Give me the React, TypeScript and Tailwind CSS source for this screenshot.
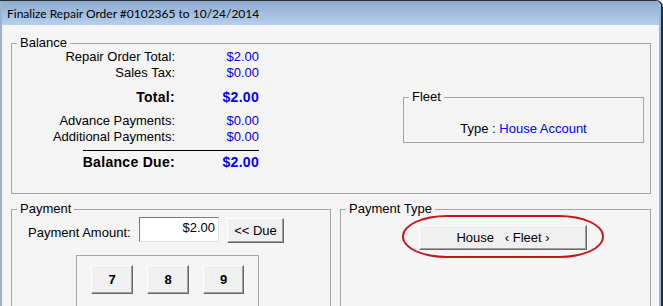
import React from 'react';

const sans = "font-['Liberation_Sans',Arial,sans-serif]";

function RaisedButton({ className = '', children }: { className?: string; children: React.ReactNode }) {
    return (
        <div
            className={`flex items-center justify-center border border-t-white border-l-white border-r-[#696969] border-b-[#696969] bg-[#f0f0f0] shadow-[inset_-1px_-1px_0_#a0a0a0] ${className}`}
        >
            {children}
        </div>
    );
}

function Group({ label, className = '', children }: { label: string; className?: string; children?: React.ReactNode }) {
    return (
        <fieldset className={`border border-[#a5a5a5] ${className}`}>
            <legend className="ml-[5px] px-[3px] text-[13px] leading-[14px] text-black">{label}</legend>
            {children}
        </fieldset>
    );
}

export default function App() {
    return (
        <div className={`h-[306px] w-[663px] overflow-hidden rounded-tr-[7px] border-t border-r-2 border-[#2b2b2b] ${sans}`}>
            <div className="flex h-full flex-col border-r-2 border-l-2 border-r-[#86bde9] border-l-[#9ab3d3]">
                <div className="flex h-[24px] shrink-0 items-center bg-gradient-to-b from-[#8dabd1] to-[#b7cfeb] pl-[5px] pt-[2px] font-['Lato','Noto_Sans',sans-serif] text-[12px] text-black">
                    Finalize Repair Order #0102365 to 10/24/2014
                </div>
                <div className="min-h-0 flex-1 bg-[#f5f5f5] pl-[9px] pt-[11px] text-[13px]">
                    <Group label="Balance" className="h-[158px] w-[640px]">
                        <div className="flex">
                            <div className="w-[247px] leading-[14px]">
                                <div className="flex h-[14px]">
                                    <span className="w-[163px] text-right">Repair Order Total:</span>
                                    <span className="w-[84px] text-right text-[#0000ff]">$2.00</span>
                                </div>
                                <div className="mt-[2px] flex h-[14px]">
                                    <span className="w-[163px] text-right">Sales Tax:</span>
                                    <span className="w-[84px] text-right text-[#0000ff]">$0.00</span>
                                </div>
                                <div className="mt-[10px] flex h-[14px] text-[14px] font-bold tracking-[0.3px]">
                                    <span className="w-[163px] text-right">Total:</span>
                                    <span className="w-[84px] text-right text-[#0000ff]">$2.00</span>
                                </div>
                                <div className="mt-[10px] flex h-[14px]">
                                    <span className="w-[163px] text-right">Advance Payments:</span>
                                    <span className="w-[84px] text-right text-[#0000ff]">$0.00</span>
                                </div>
                                <div className="mt-[2px] flex h-[14px]">
                                    <span className="w-[163px] text-right">Additional Payments:</span>
                                    <span className="w-[84px] text-right text-[#0000ff]">$0.00</span>
                                </div>
                                <div className="ml-[71px] mt-[6px] h-[1px] w-[176px] bg-black" />
                                <div className="mt-[4px] flex h-[14px] text-[14px] font-bold tracking-[0.3px]">
                                    <span className="w-[163px] text-right">Balance Due:</span>
                                    <span className="w-[84px] text-right text-[#0000ff]">$2.00</span>
                                </div>
                            </div>
                            <Group label="Fleet" className="ml-[144px] mt-[40px] h-[53px] w-[241px]">
                                <div className="mt-[18px] text-center leading-[14px]">
                                    Type : <span className="text-[#0000ff]">House Account</span>
                                </div>
                            </Group>
                        </div>
                    </Group>

                    <div className="mt-[8px] flex gap-[9px]">
                        <Group label="Payment" className="h-[120px] w-[320px]">
                            <div className="mt-[1px] flex items-start">
                                <span className="mt-[9px] w-[127px] pl-[16px] leading-[14px]">Payment Amount:</span>
                                <div className="h-[25px] w-[80px] border border-t-[#7a7a7a] border-l-[#7a7a7a] border-r-[#e3e3e3] border-b-[#e3e3e3] bg-white pr-[3px] pt-[3px] text-right leading-[14px]">
                                    $2.00
                                </div>
                                <RaisedButton className="ml-[8px] mt-[1px] h-[25px] w-[57px]">&lt;&lt; Due</RaisedButton>
                            </div>
                            <div className="ml-[64px] mt-[12px] flex h-[60px] w-[183px] gap-[14px] border border-[#a5a5a5] pl-[14px] pt-[9px]">
                                <RaisedButton className="h-[29px] w-[42px] font-bold">7</RaisedButton>
                                <RaisedButton className="h-[29px] w-[42px] font-bold">8</RaisedButton>
                                <RaisedButton className="h-[29px] w-[41px] font-bold">9</RaisedButton>
                            </div>
                        </Group>
                        <Group label="Payment Type" className="h-[120px] w-[311px]">
                            <div className="relative ml-[78px] mt-[9px] w-[168px]">
                                <RaisedButton className="h-[25px] w-[168px] whitespace-pre">House   ‹ Fleet ›</RaisedButton>
                                <div className="absolute left-[-17px] top-[-10px] h-[43px] w-[202px] rounded-[45px/21px] border-2 border-[#c8141c]" />
                            </div>
                        </Group>
                    </div>
                </div>
            </div>
        </div>
    );
}
